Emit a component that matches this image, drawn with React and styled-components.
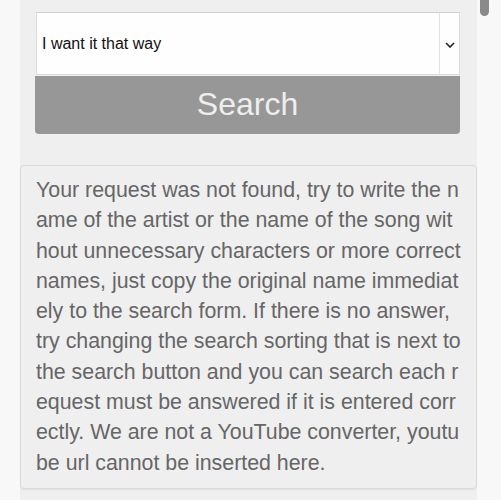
import React from 'react'
import styled, { createGlobalStyle } from 'styled-components'

const GlobalStyle = createGlobalStyle`
  html, body {
    margin: 0;
    padding: 0;
    background: #f8f8f8;
    overflow: hidden;
    font-family: "Liberation Sans", Arial, sans-serif;
  }
`

const Page = styled.div`
  display: flex;
  min-height: 500px;
  padding-left: 20px;
`

const Column = styled.div`
  width: 457px;
  background: #efefef;
  padding-top: 12px;
  display: flex;
  flex-direction: column;
  gap: 31px;
  min-height: 488px;
`

const Form = styled.form`
  display: flex;
  flex-direction: column;
  padding: 0 17px 0 16px;
`

const SelectBox = styled.div`
  display: flex;
  height: 63px;
  box-sizing: border-box;
  border: 1px solid #dcdcdc;
  border-top-color: #d0d0d0;
  background: #fefefe;
`

const Select = styled.select`
  flex: 1;
  appearance: none;
  border: 0;
  background: transparent;
  padding: 0 0 0 5px;
  font-family: "Liberation Sans", Arial, sans-serif;
  font-size: 16px;
  color: #111;
  outline: none;
`

const Arrow = styled.div`
  width: 19px;
  display: flex;
  align-items: center;
  justify-content: center;
  border-left: 1px solid #e2e2e2;
  padding-top: 2px;
`

const SearchButton = styled.button`
  margin: 1px 0 0 -1px;
  height: 58px;
  border: 0;
  border-radius: 0 0 4px 4px;
  background: #979797;
  color: #eeeeee;
  font-family: "Liberation Sans", Arial, sans-serif;
  font-size: 32px;
  padding: 0 0 2px;
`

const Notice = styled.div`
  border: 1px solid #dadada;
  border-radius: 4px;
  box-shadow: 0 1px 2px rgba(0, 0, 0, 0.06);
  padding: 9px 15px 10px;
  color: #666;
  font-size: 21.35px;
  line-height: 30.3px;
  word-break: break-all;
`

const Scrollbar = styled.div`
  position: fixed;
  top: 0;
  right: 0;
  width: 24px;
  height: 100%;
  display: flex;
  justify-content: flex-start;
  padding-left: 3px;
  box-sizing: border-box;
`

const Thumb = styled.div`
  width: 9px;
  height: 16px;
  border-radius: 0 0 5px 5px;
  background: #8a8a8a;
`

export default function App() {
  return (
    <>
      <GlobalStyle />
      <Page>
        <Column>
          <Form onSubmit={e => e.preventDefault()}>
            <SelectBox>
              <Select defaultValue="way">
                <option value="way">I want it that way</option>
              </Select>
              <Arrow>
                <svg width="10" height="6" viewBox="0 0 10 6">
                  <polyline points="1,1 5,5 9,1" fill="none" stroke="#222" strokeWidth="1.6" />
                </svg>
              </Arrow>
            </SelectBox>
            <SearchButton type="submit">Search</SearchButton>
          </Form>
          <Notice>
            Your request was not found, try to write the name of the artist or the name of the song without unnecessary characters or more correct names, just copy the original name immediately to the search form. If there is no answer, try changing the search sorting that is next to the search button and you can search each request must be answered if it is entered correctly. We are not a YouTube converter, youtube url cannot be inserted here.
          </Notice>
        </Column>
      </Page>
      <Scrollbar>
        <Thumb />
      </Scrollbar>
    </>
  )
}
